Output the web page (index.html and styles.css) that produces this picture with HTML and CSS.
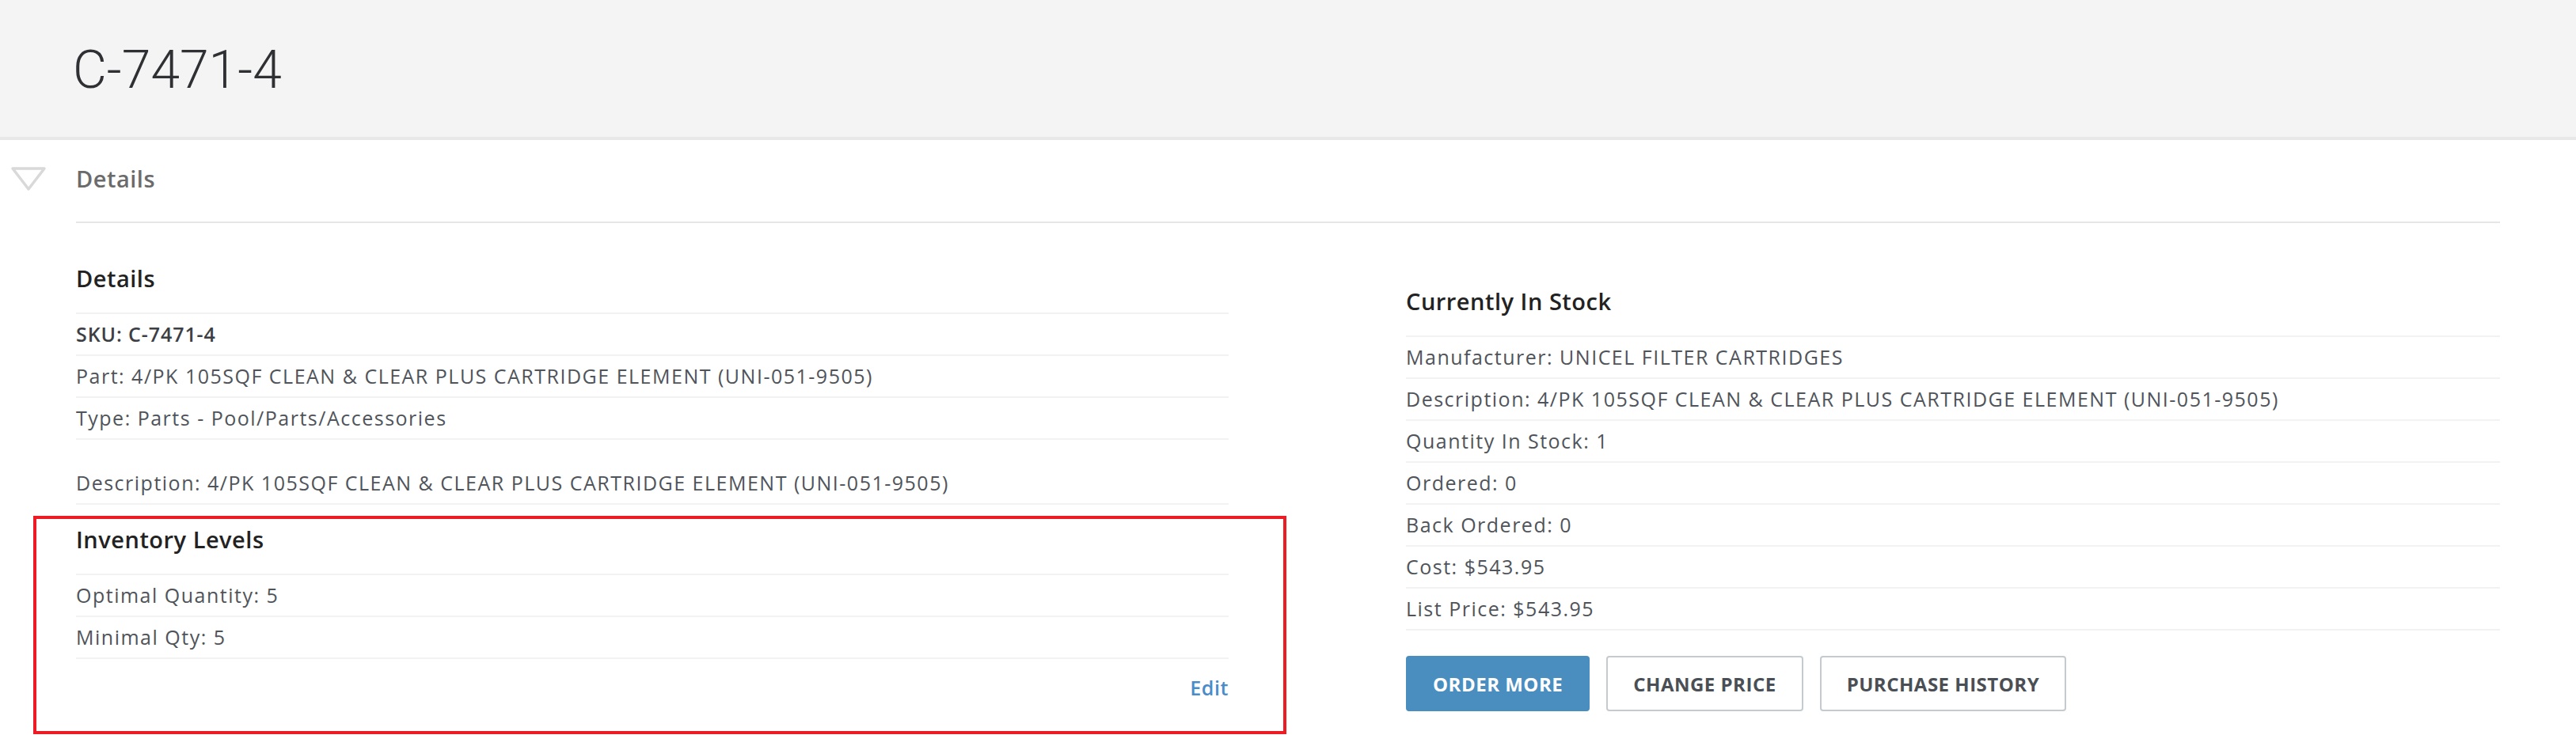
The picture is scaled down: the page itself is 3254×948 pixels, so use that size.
FILE: index.html
```html
<!DOCTYPE html>
<html lang="en">
  <head>
    <meta charset="UTF-8" />
    <title>C-7471-4</title>
    <link rel="stylesheet" href="styles.css">
  </head>
  <body>
    <header class="page-head">
      <h1>C-7471-4</h1>
    </header>

    <section class="panel">
      <div class="panel-bar">
        <svg class="toggle" width="46" height="32" viewBox="0 0 46 32">
          <polygon points="3,3 43,3 23,29" fill="none" stroke="#d9d9d9" stroke-width="3.5" stroke-linejoin="round" />
        </svg>
        <h2>Details</h2>
      </div>

      <div class="panel-body">
        <div class="col">
          <h3>Details</h3>
          <ul class="rows">
            <li class="strong">SKU: C-7471-4</li>
            <li>Part: 4/PK 105SQF CLEAN &amp; CLEAR PLUS CARTRIDGE ELEMENT (UNI-051-9505)</li>
            <li>Type: Parts - Pool/Parts/Accessories</li>
            <li class="tall">Description: 4/PK 105SQF CLEAN &amp; CLEAR PLUS CARTRIDGE ELEMENT (UNI-051-9505)</li>
          </ul>

          <div class="inventory">
            <h3>Inventory Levels</h3>
            <ul class="rows">
              <li>Optimal Quantity: 5</li>
              <li>Minimal Qty: 5</li>
            </ul>
            <div class="edit-row"><a href="#" class="edit">Edit</a></div>
          </div>
        </div>

        <div class="col">
          <h3>Currently In Stock</h3>
          <ul class="rows">
            <li>Manufacturer: UNICEL FILTER CARTRIDGES</li>
            <li>Description: 4/PK 105SQF CLEAN &amp; CLEAR PLUS CARTRIDGE ELEMENT (UNI-051-9505)</li>
            <li>Quantity In Stock: 1</li>
            <li>Ordered: 0</li>
            <li>Back Ordered: 0</li>
            <li>Cost: $543.95</li>
            <li>List Price: $543.95</li>
          </ul>
          <div class="actions">
            <button class="btn btn-primary">ORDER MORE</button>
            <button class="btn">CHANGE PRICE</button>
            <button class="btn">PURCHASE HISTORY</button>
          </div>
        </div>
      </div>
    </section>
  </body>
</html>
```

FILE: styles.css
```css
body {
  margin: 0;
  background: #fff;
  font-family: "Open Sans", "Noto Sans", sans-serif;
  color: #4f545a;
}
.page-head {
  background: #f4f4f4;
  border-bottom: 4px solid #e8e8e8;
  padding: 56px 92px 51px;
}
h1 {
  margin: 0;
  font-family: Roboto, "Liberation Sans", sans-serif;
  font-weight: 300;
  font-size: 66px;
  line-height: 66px;
  color: #2f3033;
}
.panel-bar {
  display: grid;
  grid-template-columns: 96px 1fr 96px;
}
.toggle {
  margin: 33px 0 0 13px;
}
h2 {
  margin: 0;
  padding: 35px 0 40px;
  border-bottom: 2px solid #e6e6e6;
  font-size: 29px;
  line-height: 28px;
  font-weight: 600;
  letter-spacing: 0.5px;
  color: #6b6b6b;
}
.panel-body {
  display: grid;
  grid-template-columns: 1456px 1fr;
  column-gap: 224px;
  align-items: center;
  padding: 56px 96px 0;
}
h3 {
  margin: 0;
  padding-bottom: 29px;
  border-bottom: 2px solid #f2f2f2;
  font-size: 29px;
  line-height: 28px;
  font-weight: 600;
  letter-spacing: 0.5px;
  color: #222;
}
.rows {
  list-style: none;
  margin: 0;
  padding: 0;
}
.rows li {
  height: 51px;
  line-height: 51px;
  border-bottom: 2px solid #f2f2f2;
  font-size: 25px;
  letter-spacing: 1.5px;
  white-space: nowrap;
}
.rows li.strong {
  font-weight: 600;
  color: #3c4045;
  letter-spacing: 0.9px;
}
.rows li.tall {
  box-sizing: border-box;
  height: 82px;
  padding-top: 29px;
}
.inventory {
  margin: 14px -73px 0 -54px;
  padding: 12px 69px 25px 50px;
  border: 4px solid #ed1c24;
}
.edit-row {
  padding-top: 11px;
  line-height: 51px;
  text-align: right;
}
.edit {
  font-size: 25px;
  font-weight: 600;
  letter-spacing: 0.6px;
  color: #4a8cca;
  text-decoration: none;
}
.actions {
  display: flex;
  gap: 21px;
  margin-top: 32px;
}
.btn {
  height: 70px;
  padding: 0 32px;
  border: 2px solid #c4cacd;
  border-radius: 4px;
  background: #fff;
  font-family: "Open Sans", "Noto Sans", sans-serif;
  font-size: 24px;
  font-weight: 700;
  letter-spacing: 0.5px;
  color: #4a4f55;
}
.btn-primary {
  background: #4a8dbf;
  border-color: #4a8dbf;
  color: #fff;
}
```
